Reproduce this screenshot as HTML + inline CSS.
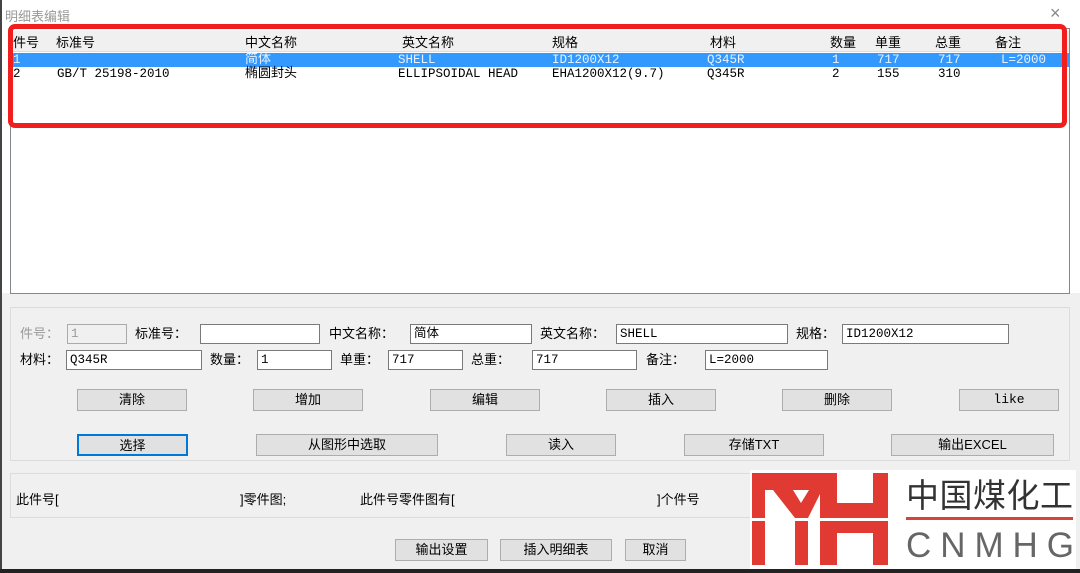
<!DOCTYPE html>
<html><head><meta charset="utf-8"><style>
*{margin:0;padding:0;box-sizing:border-box}
body{width:1080px;height:573px;overflow:hidden;background:#f0f0f0;position:relative;font-family:"Liberation Sans","Noto Sans CJK SC",sans-serif;font-size:13px;color:#000}
.a{position:absolute;white-space:nowrap}
.m{font-family:"Liberation Mono","Noto Sans CJK SC",monospace;font-size:12.5px}
.inp{position:absolute;height:20px;background:#fff;border:1px solid #7a7a7a;font-family:"Liberation Mono","Noto Sans CJK SC",monospace;font-size:12.5px;padding:1px 3px;line-height:16px}
.btn{position:absolute;height:22px;background:#e1e1e1;border:1px solid #adadad;text-align:center;line-height:20px;font-size:13px}
.lbl{position:absolute;line-height:20px;white-space:nowrap}
</style></head><body>
<div class="a" style="left:0;top:0;width:1080px;height:293px;background:#fff"></div>
<div class="a" style="left:0;top:0;width:2px;height:573px;background:#444"></div>
<div class="a" style="left:0;top:569px;width:1080px;height:4px;background:#222"></div>
<div class="a" style="left:5px;top:6px;color:#999;font-size:13px">明细表编辑</div>
<div class="a" style="left:1050px;top:3px;color:#888;font-size:18px">×</div>
<!-- list -->
<div class="a" style="left:10px;top:28px;width:1060px;height:266px;border:1px solid #828790;background:#fff"></div>
<div class="a" style="left:11px;top:31px;width:1058px;height:21px;background:#f0f0f0;border-bottom:1px solid #ddd"></div>
<div class="a" style="left:11px;top:53px;width:1058px;height:14px;background:#3399ff"></div>
<div class="a" style="top:32px;left:13px">件号</div>
<div class="a" style="top:32px;left:56px">标准号</div>
<div class="a" style="top:32px;left:245px">中文名称</div>
<div class="a" style="top:32px;left:402px">英文名称</div>
<div class="a" style="top:32px;left:552px">规格</div>
<div class="a" style="top:32px;left:710px">材料</div>
<div class="a" style="top:32px;left:830px">数量</div>
<div class="a" style="top:32px;left:875px">单重</div>
<div class="a" style="top:32px;left:935px">总重</div>
<div class="a" style="top:32px;left:995px">备注</div>
<div style="color:#e8f2ff">
<div class="a m" style="top:53px;left:13px;line-height:15px">1</div>
<div class="a m" style="top:53px;left:245px;line-height:14px;font-size:13px">简体</div>
<div class="a m" style="top:53px;left:398px;line-height:15px">SHELL</div>
<div class="a m" style="top:53px;left:552px;line-height:15px">ID1200X12</div>
<div class="a m" style="top:53px;left:707px;line-height:15px">Q345R</div>
<div class="a m" style="top:53px;left:832px;line-height:15px">1</div>
<div class="a m" style="top:53px;left:877px;line-height:15px">717</div>
<div class="a m" style="top:53px;left:938px;line-height:15px">717</div>
<div class="a m" style="top:53px;left:1001px;line-height:15px">L=2000</div>
</div>
<div class="a m" style="top:67px;left:13px;line-height:15px">2</div>
<div class="a m" style="top:67px;left:57px;line-height:15px">GB/T 25198-2010</div>
<div class="a m" style="top:67px;left:245px;line-height:14px;font-size:13px">椭圆封头</div>
<div class="a m" style="top:67px;left:398px;line-height:15px">ELLIPSOIDAL HEAD</div>
<div class="a m" style="top:67px;left:552px;line-height:15px">EHA1200X12(9.7)</div>
<div class="a m" style="top:67px;left:707px;line-height:15px">Q345R</div>
<div class="a m" style="top:67px;left:832px;line-height:15px">2</div>
<div class="a m" style="top:67px;left:877px;line-height:15px">155</div>
<div class="a m" style="top:67px;left:938px;line-height:15px">310</div>
<div class="a" style="left:8px;top:24px;width:1059px;height:104px;border:5px solid #f21d1d;border-radius:7px"></div>
<!-- group 1 -->
<div class="a" style="left:10px;top:307px;width:1060px;height:154px;border:1px solid #dcdcdc"></div>
<div class="lbl" style="left:20px;top:324px;color:#999">件号：</div>
<div class="inp" style="left:67px;top:324px;width:60px;background:#f0f0f0;border-color:#aaa;color:#999">1</div>
<div class="lbl" style="left:135px;top:324px">标准号：</div>
<div class="inp" style="left:200px;top:324px;width:120px"></div>
<div class="lbl" style="left:329px;top:324px">中文名称：</div>
<div class="inp" style="left:410px;top:324px;width:122px">简体</div>
<div class="lbl" style="left:540px;top:324px">英文名称：</div>
<div class="inp" style="left:616px;top:324px;width:172px">SHELL</div>
<div class="lbl" style="left:796px;top:324px">规格：</div>
<div class="inp" style="left:842px;top:324px;width:167px">ID1200X12</div>
<div class="lbl" style="left:20px;top:350px">材料：</div>
<div class="inp" style="left:66px;top:350px;width:136px">Q345R</div>
<div class="lbl" style="left:210px;top:350px">数量：</div>
<div class="inp" style="left:257px;top:350px;width:75px">1</div>
<div class="lbl" style="left:340px;top:350px">单重：</div>
<div class="inp" style="left:388px;top:350px;width:75px">717</div>
<div class="lbl" style="left:471px;top:350px">总重：</div>
<div class="inp" style="left:532px;top:350px;width:105px">717</div>
<div class="lbl" style="left:646px;top:350px">备注：</div>
<div class="inp" style="left:705px;top:350px;width:123px">L=2000</div>
<div class="btn" style="left:77px;top:389px;width:110px">清除</div>
<div class="btn" style="left:253px;top:389px;width:110px">增加</div>
<div class="btn" style="left:430px;top:389px;width:110px">编辑</div>
<div class="btn" style="left:606px;top:389px;width:110px">插入</div>
<div class="btn" style="left:782px;top:389px;width:110px">删除</div>
<div class="btn m" style="left:959px;top:389px;width:100px">like</div>
<div class="btn" style="left:77px;top:434px;width:111px;border:2px solid #0078d7">选择</div>
<div class="btn" style="left:256px;top:434px;width:182px">从图形中选取</div>
<div class="btn" style="left:506px;top:434px;width:110px">读入</div>
<div class="btn" style="left:684px;top:434px;width:140px">存储TXT</div>
<div class="btn" style="left:891px;top:434px;width:163px">输出EXCEL</div>
<!-- group 2 -->
<div class="a" style="left:10px;top:473px;width:1060px;height:45px;border:1px solid #dcdcdc"></div>
<div class="lbl" style="left:16px;top:490px">此件号[</div>
<div class="lbl" style="left:240px;top:490px">]零件图;</div>
<div class="lbl" style="left:360px;top:490px">此件号零件图有[</div>
<div class="lbl" style="left:657px;top:490px">]个件号</div>
<div class="btn" style="left:395px;top:539px;width:93px">输出设置</div>
<div class="btn" style="left:500px;top:539px;width:112px">插入明细表</div>
<div class="btn" style="left:625px;top:539px;width:61px">取消</div>
<!-- logo -->
<svg class="a" style="left:0;top:0" width="1080" height="573">
<rect x="750" y="470" width="326" height="99" fill="#fff"/>
<g fill="#e03a33">
<rect x="752" y="473" width="13" height="92"/>
<rect x="752" y="473" width="85" height="17"/>
<polygon points="773,490 793,490 801,503 809,490 822,490 808,518 795,518"/>
<rect x="795" y="515" width="13" height="50"/>
<rect x="820" y="473" width="17" height="92"/>
<rect x="837" y="503" width="36" height="30"/>
<rect x="873" y="473" width="15" height="92"/>
</g>
<rect x="750" y="518" width="143" height="3" fill="#fff"/>
<rect x="906" y="517" width="167" height="3" fill="#d9413b"/>
<text x="906" y="507" font-family="Noto Sans CJK SC,sans-serif" font-size="33" fill="#333" textLength="167">中国煤化工</text>
<text x="906" y="557" font-family="Liberation Sans,sans-serif" font-size="35" fill="#666" textLength="168">CNMHG</text>
</svg>
</body></html>
